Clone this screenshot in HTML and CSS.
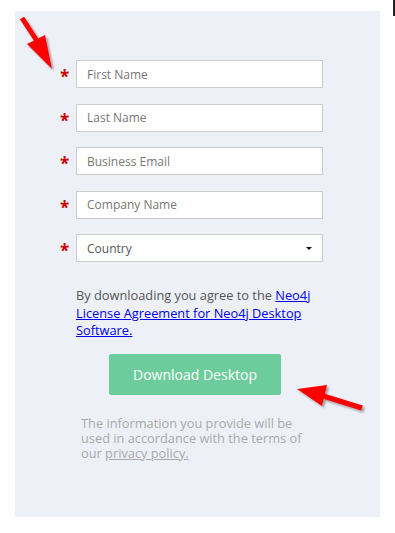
FILE: index.html
```html
<!DOCTYPE html>
<html lang="en">
<head>
    <meta charset="UTF-8">
    <title>Download Neo4j Desktop</title>
    <link rel="stylesheet" href="styles.css">
</head>
<body>
    <div class="edge"></div>
    <div class="panel">
        <form class="form">
            <div class="row"><span class="req">*</span><input type="text" placeholder="First Name"></div>
            <div class="row"><span class="req">*</span><input type="text" placeholder="Last Name"></div>
            <div class="row"><span class="req">*</span><input type="text" placeholder="Business Email"></div>
            <div class="row"><span class="req">*</span><input type="text" placeholder="Company Name"></div>
            <div class="row">
                <span class="req">*</span>
                <div class="select">Country<span class="caret"></span></div>
            </div>
            <p class="agree">By downloading you agree to the <a href="#">Neo4j License Agreement for Neo4j Desktop Software.</a></p>
            <div class="actions"><button type="button" class="btn">Download Desktop</button></div>
            <p class="note">The information you provide will be used in accordance with the terms of our <a href="#">privacy policy.</a></p>
        </form>
    </div>

    <svg class="arrows" width="395" height="533" viewBox="0 0 395 533">
        <defs>
            <filter id="sh" x="-20%" y="-20%" width="140%" height="140%">
                <feDropShadow dx="2" dy="2" stdDeviation="1.2" flood-color="#000" flood-opacity="0.35"/>
            </filter>
        </defs>
        <g fill="#ff0000" stroke="#ff0000" filter="url(#sh)">
            <line x1="22" y1="18" x2="39" y2="44" stroke-width="5"/>
            <polygon points="27,44 45,35 52,69" stroke="none"/>
            <line x1="362" y1="408" x2="320" y2="395" stroke-width="5"/>
            <polygon points="297,389 327,385 322,406" stroke="none"/>
        </g>
    </svg>
</body>
</html>
```

FILE: styles.css
```css
* {
    box-sizing: border-box;
    margin: 0;
    padding: 0;
}

body {
    font-family: 'Open Sans', sans-serif;
    background-color: #ffffff;
    color: #555555;
    width: 395px;
    height: 533px;
    position: relative;
    overflow: hidden;
}

.edge {
    position: absolute;
    left: 393px;
    top: 0;
    width: 2px;
    height: 16px;
    background-color: #222222;
}

.panel {
    margin: 11px 0 0 15px;
    width: 365px;
    height: 506px;
    background-color: #edf0f7;
    padding: 49px 0 0 44px;
}

.form {
    width: 264px;
}

.row {
    display: flex;
    align-items: center;
    height: 28px;
    margin-bottom: 15.5px;
}

.req {
    width: 17px;
    color: #cc0000;
    font-size: 17px;
    font-weight: 700;
    line-height: 1;
    padding-top: 5px;
    padding-left: 1px;
}

.row input,
.select {
    width: 247px;
    height: 28px;
    border: 1px solid #cccccc;
    background-color: #ffffff;
    font-family: 'Open Sans', sans-serif;
    font-size: 12px;
    color: #555555;
    padding: 0 10px;
    outline: none;
}

.row input::placeholder {
    color: #777777;
}

.select {
    display: flex;
    align-items: center;
    justify-content: space-between;
    color: #555555;
    padding-right: 10px;
}

.caret {
    width: 0;
    height: 0;
    border-left: 3px solid transparent;
    border-right: 3px solid transparent;
    border-top: 3px solid #111111;
}

.agree {
    margin: 25px 0 0 17px;
    width: 244px;
    font-size: 12.8px;
    line-height: 17.5px;
    color: #555555;
}

.agree a {
    color: #0000ee;
}

.actions {
    margin: 14px 0 0 50px;
}

.btn {
    width: 172px;
    height: 41px;
    border: none;
    border-radius: 2px;
    background-color: #6dcc9c;
    color: #ffffff;
    font-family: 'Open Sans', sans-serif;
    font-size: 14px;
}

.note {
    margin: 21px 0 0 22px;
    width: 232px;
    font-size: 12.8px;
    line-height: 15px;
    color: #aaaaaa;
}

.note a {
    color: #aaaaaa;
}

.arrows {
    position: absolute;
    left: 0;
    top: 0;
    pointer-events: none;
}
```
